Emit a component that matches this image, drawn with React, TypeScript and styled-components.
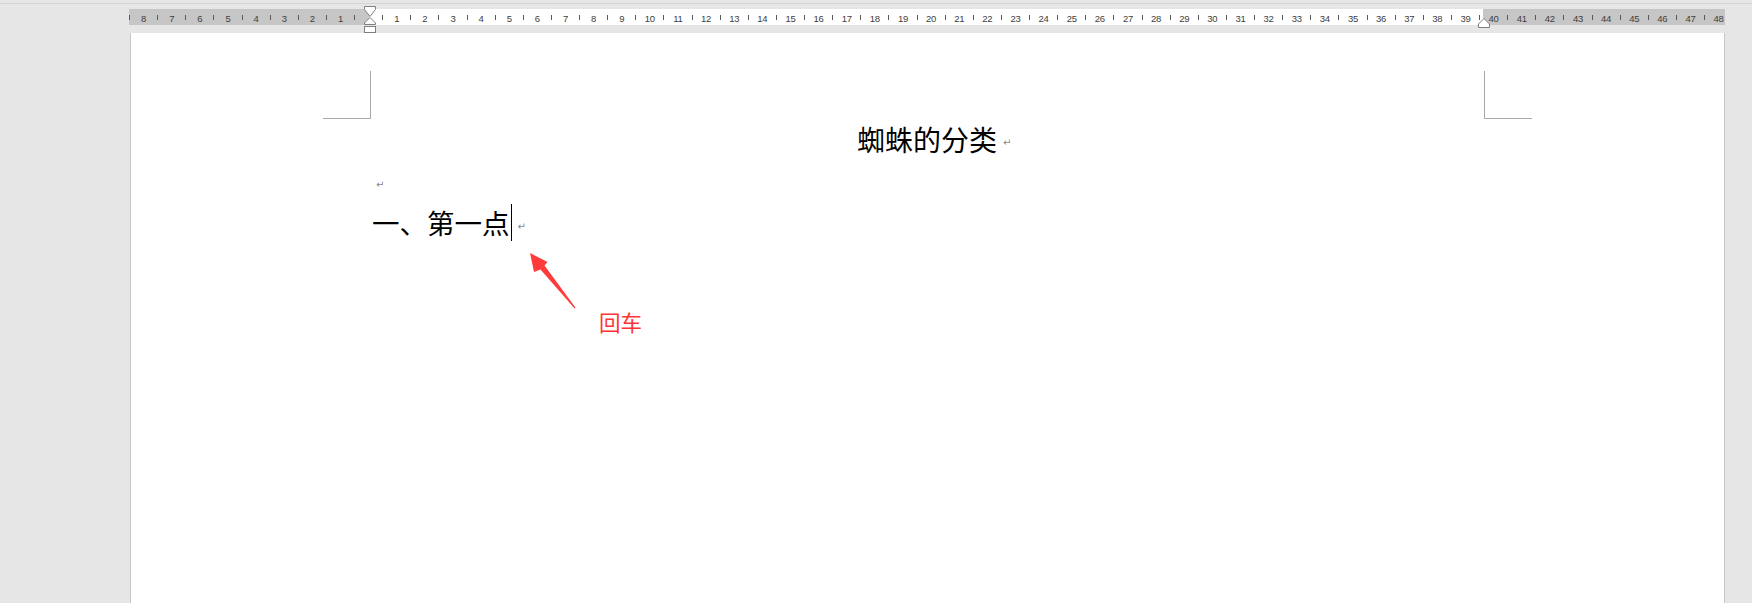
import React from "react";
import styled, { createGlobalStyle } from "styled-components";

const GlobalStyle = createGlobalStyle`
  html, body {
    margin: 0;
    padding: 0;
    background: #e6e6e6;
    overflow: hidden;
  }
  #root {
    height: 603px;
  }
`;

const UNIT = 28.15;
const HALF = UNIT / 2;

const Screen = styled.div`
  width: 1752px;
  height: 603px;
  background: #e6e6e6;
  display: flex;
  flex-direction: column;
  overflow: hidden;
`;

const TopEdge = styled.div`
  height: 3px;
  border-bottom: 1px solid #d6d6d6;
  flex: 0 0 auto;
`;

const RulerRow = styled.div`
  margin-top: 5px;
  padding-left: 129px;
  flex: 0 0 auto;
`;

const Ruler = styled.div`
  position: relative;
  width: 1596px;
  height: 16px;
  background: linear-gradient(
    to right,
    #c6c6c6 0 240px,
    #ffffff 240px 1354px,
    #c6c6c6 1354px 100%
  );
`;

const Scale = styled.div`
  display: flex;
  align-items: center;
  height: 100%;
  margin-left: -6.5px;
  overflow: hidden;
  width: calc(100% + 6.5px);
`;

const Cell = styled.div`
  flex: 0 0 ${HALF}px;
  width: ${HALF}px;
  display: flex;
  justify-content: center;
  align-items: center;
  height: 100%;
  padding-top: 2px;
  box-sizing: border-box;
  font-family: "Liberation Sans", Arial, sans-serif;
  font-size: 9.5px;
  color: #404040;
  letter-spacing: -0.2px;
`;

const Tick = styled.span`
  display: block;
  width: 1px;
  height: 5px;
  background: #595959;
  margin-top: -1px;
`;

const Marker = styled.svg<{ $left: number; $top: number }>`
  position: absolute;
  left: ${(p) => p.$left}px;
  top: ${(p) => p.$top}px;
  overflow: visible;
`;

const Page = styled.div`
  position: relative;
  margin-top: 8px;
  margin-left: 130px;
  width: 1595px;
  flex: 1 1 auto;
  box-sizing: border-box;
  background: #ffffff;
  border-left: 1px solid #c8c8c8;
  border-right: 1px solid #c8c8c8;
  padding-top: 38px;
`;

const MarginMarks = styled.div`
  display: flex;
  justify-content: space-between;
  padding: 0 192px 0 192px;
`;

const CornerMark = styled.div<{ $side: "left" | "right" }>`
  width: 47px;
  height: 47px;
  border-bottom: 1px solid #a9a9a9;
  ${(p) =>
    p.$side === "left"
      ? "border-right: 1px solid #a9a9a9;"
      : "border-left: 1px solid #a9a9a9;"}
`;

const TextColumn = styled.div`
  padding: 0 240px 0 239px;
  font-family: "Noto Sans CJK SC", "Noto Sans", sans-serif;
  color: #000;
`;

const Title = styled.div`
  height: 43px;
  line-height: 43px;
  margin-top: -1px;
  font-size: 28px;
  text-align: center;
  white-space: nowrap;
`;

const EmptyLine = styled.div`
  height: 42px;
  line-height: 42px;
  padding-left: 6px;
`;

const Heading = styled.div`
  height: 38px;
  line-height: 38px;
  font-size: 27.5px;
  padding-left: 2px;
  white-space: nowrap;
  display: flex;
  align-items: center;
`;

const ParaMark = styled.span<{ $hang?: boolean }>`
  display: inline-block;
  font-family: "DejaVu Sans", sans-serif;
  font-size: 10px;
  line-height: 1;
  color: #878787;
  vertical-align: middle;
  margin-left: 6px;
  ${(p) => (p.$hang ? "width: 0; margin-right: -6px;" : "")}
`;

const EmptyMark = styled(ParaMark)`
  margin-left: 0;
`;

const Caret = styled.span`
  display: inline-block;
  width: 1px;
  height: 37px;
  background: #000;
  margin-left: 1px;
`;

const HeadingMark = styled(ParaMark)`
  margin-left: 6px;
  margin-top: 10px;
`;

const Annotation = styled.svg`
  position: absolute;
  left: 397px;
  top: 217px;
  overflow: visible;
`;

const CalloutLabel = styled.div`
  position: absolute;
  left: 468px;
  top: 277px;
  font-family: "Noto Sans CJK SC", sans-serif;
  font-size: 21.5px;
  line-height: 24px;
  color: #ff3535;
  white-space: nowrap;
`;

const cells: number[] = [];
for (let i = -17; i <= 97; i++) cells.push(i);

export default function App() {
  return (
    <>
      <GlobalStyle />
      <Screen>
        <TopEdge />
        <RulerRow>
          <Ruler>
            <Scale>
              {cells.map((i) => (
                <Cell key={i}>
                  {i === 0 ? null : i % 2 !== 0 ? <Tick /> : Math.abs(i / 2)}
                </Cell>
              ))}
            </Scale>
            <Marker $left={234.5} $top={-3} width="12" height="28" viewBox="0 0 12 28">
              <path
                d="M0.5,0.5 H11.5 V3.5 L6,10.5 L0.5,3.5 Z"
                fill="#ffffff"
                stroke="#7f7f7f"
                strokeWidth="1"
              />
              <path
                d="M6,11.5 L11.5,17 V18.5 H0.5 V17 Z"
                fill="#ffffff"
                stroke="#7f7f7f"
                strokeWidth="1"
              />
              <rect x="0.5" y="20.5" width="11" height="6" fill="#ffffff" stroke="#7f7f7f" strokeWidth="1" />
            </Marker>
            <Marker $left={1348.5} $top={9} width="12" height="10" viewBox="0 0 12 10">
              <path
                d="M6,0.5 L11.5,6 V9.5 H0.5 V6 Z"
                fill="#ffffff"
                stroke="#7f7f7f"
                strokeWidth="1"
              />
            </Marker>
          </Ruler>
        </RulerRow>
        <Page>
          <MarginMarks>
            <CornerMark $side="left" />
            <CornerMark $side="right" />
          </MarginMarks>
          <TextColumn>
            <Title>
              蜘蛛的分类
              <ParaMark $hang>↵</ParaMark>
            </Title>
            <EmptyLine>
              <EmptyMark>↵</EmptyMark>
            </EmptyLine>
            <Heading>
              一、第一点
              <Caret />
              <HeadingMark>↵</HeadingMark>
            </Heading>
          </TextColumn>
          <Annotation width="50" height="60" viewBox="0 0 50 60">
            <polygon
              points="2,3 19.5,12 16.5,15.5 47.4,57.6 46.6,58.4 12.5,19.5 6,22"
              fill="#ff3b3b"
            />
          </Annotation>
          <CalloutLabel>回车</CalloutLabel>
        </Page>
      </Screen>
    </>
  );
}
